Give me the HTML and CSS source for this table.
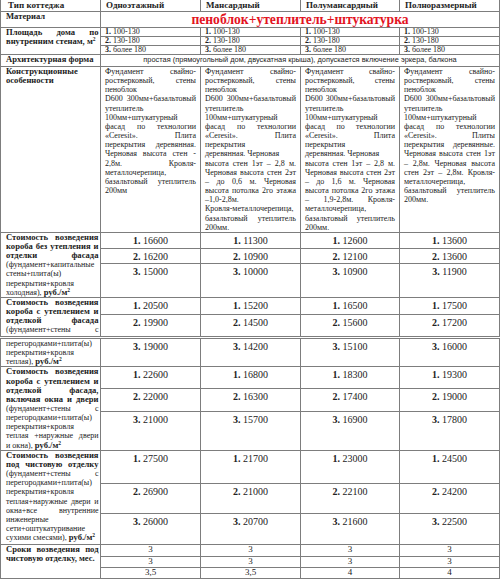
FILE: index.html
```html
<!DOCTYPE html>
<html lang="ru">
<head>
<meta charset="utf-8">
<title>Стоимость коттеджей</title>
<link rel="stylesheet" href="styles.css">
</head>
<body>
<table class="grid first">
  <colgroup>
    <col class="c1"><col class="c2"><col class="c3"><col class="c4"><col class="c5">
  </colgroup>
  <tr class="h-head">
    <th>Тип коттеджа</th>
    <th>Одноэтажный</th>
    <th>Мансардный</th>
    <th>Полумансардный</th>
    <th>Полноразмерный</th>
  </tr>
  <tr class="h-mat">
    <td class="lbl">Материал</td>
    <td colspan="4" class="material">пеноблок+утеплитель+штукатурка</td>
  </tr>
  <tr class="h-area">
    <td rowspan="3" class="lbl">
      <span class="ln j">Площадь дома по</span>
      <span class="ln">внутренним стенам, м<sup>2</sup></span>
    </td>
    <td class="area"><b>1.</b> 100-130</td>
    <td class="area"><b>1.</b> 100-130</td>
    <td class="area"><b>1.</b> 100-130</td>
    <td class="area"><b>1.</b> 100-130</td>
  </tr>
  <tr class="h-area">
    <td class="area"><b>2.</b> 130-180</td>
    <td class="area"><b>2.</b> 130-180</td>
    <td class="area"><b>2.</b> 130-180</td>
    <td class="area"><b>2.</b> 130-180</td>
  </tr>
  <tr class="h-area">
    <td class="area"><b>3.</b> более 180</td>
    <td class="area"><b>3.</b> более 180</td>
    <td class="area"><b>3.</b> более 180</td>
    <td class="area"><b>3.</b> более 180</td>
  </tr>
  <tr class="h-arch">
    <td class="lbl">Архитектурная форма</td>
    <td colspan="4" class="arch">простая (прямоугольный дом, двускатная крыша), допускается включение эркера, балкона</td>
  </tr>
  <tr class="h-constr">
    <td class="lbl">Конструкционные особенности</td>
    <td class="desc">Фундамент свайно-ростверковый, стены пеноблок D600&nbsp;300мм+базальтовый утеплитель 100мм+штукатурный фасад по технологии «Ceresit». Плита перекрытия деревянная. Черновая высота стен - 2,8м. Кровля-металлочерепица, базальтовый утеплитель 200мм</td>
    <td class="desc">Фундамент свайно-ростверковый, стены пеноблок D600&nbsp;300мм+базальтовый утеплитель 100мм+штукатурный фасад по технологии «Ceresit». Плита перекрытия<br>деревянная. Черновая<br>высота стен 1эт – 2,8 м. Черновая высота стен 2эт – до 0,6 м. Черновая высота потолка 2го этажа –1,0-2,8м.<br>Кровля-металлочерепица, базальтовый утеплитель 200мм.</td>
    <td class="desc">Фундамент свайно-ростверковый, стены пеноблок D600&nbsp;300мм+базальтовый утеплитель 100мм+штукатурный фасад по технологии «Ceresit». Плита перекрытия<br>деревянная. Черновая<br>высота стен 1эт – 2,8 м. Черновая высота стен 2эт – до 1,6 м. Черновая высота потолка 2го этажа – 1,9-2,8м. Кровля-металлочерепица, базальтовый утеплитель 200мм.</td>
    <td class="desc">Фундамент свайно-ростверковый, стены пеноблок D600&nbsp;300мм+базальтовый утеплитель 100мм+штукатурный фасад по технологии «Ceresit». Плиты перекрытия деревянные. Черновая высота стен 1эт – 2,8м. Черновая высота стен 2эт – 2,8м. Кровля-металлочерепица, базальтовый утеплитель 200мм.</td>
  </tr>
  <tr class="h16">
    <td rowspan="3" class="lbl">
      <span class="ln j">Стоимость возведения</span>
      <span class="ln j">короба без утепления и</span>
      <span class="ln j">отделки фасада</span>
      <span class="ln n">(фундамент+капитальные</span>
      <span class="ln n">стены+плита(ы)</span>
      <span class="ln n">перекрытия+кровля</span>
      <span class="ln"><span class="n">холодная),</span> руб./м<sup>2</sup></span>
    </td>
    <td class="num"><b>1.</b> 16600</td>
    <td class="num"><b>1.</b> 11300</td>
    <td class="num"><b>1.</b> 12600</td>
    <td class="num"><b>1.</b> 13600</td>
  </tr>
  <tr class="h15">
    <td class="num"><b>2.</b> 16200</td>
    <td class="num"><b>2.</b> 10900</td>
    <td class="num"><b>2.</b> 12100</td>
    <td class="num"><b>2.</b> 13600</td>
  </tr>
  <tr class="h34">
    <td class="num"><b>3.</b> 15000</td>
    <td class="num"><b>3.</b> 10000</td>
    <td class="num"><b>3.</b> 10900</td>
    <td class="num"><b>3.</b> 11900</td>
  </tr>
  <tr class="h17">
    <td rowspan="2" class="lbl">
      <span class="ln j">Стоимость возведения</span>
      <span class="ln j">короба с утеплением и</span>
      <span class="ln j">отделкой фасада</span>
      <span class="ln j n">(фундамент+стены с</span>
    </td>
    <td class="num"><b>1.</b> 20500</td>
    <td class="num"><b>1.</b> 15200</td>
    <td class="num"><b>1.</b> 16500</td>
    <td class="num"><b>1.</b> 17500</td>
  </tr>
  <tr class="h22">
    <td class="num"><b>2.</b> 19900</td>
    <td class="num"><b>2.</b> 14500</td>
    <td class="num"><b>2.</b> 15600</td>
    <td class="num"><b>2.</b> 17200</td>
  </tr>
</table>
<table class="grid second">
  <colgroup>
    <col class="c1"><col class="c2"><col class="c3"><col class="c4"><col class="c5">
  </colgroup>
  <tr class="h28">
    <td class="lbl">
      <span class="ln n">перегородками+плита(ы)</span>
      <span class="ln n">перекрытия+кровля</span>
      <span class="ln"><span class="n">теплая),</span> руб./м<sup>2</sup></span>
    </td>
    <td class="num"><b>3.</b> 19000</td>
    <td class="num"><b>3.</b> 14200</td>
    <td class="num"><b>3.</b> 15100</td>
    <td class="num"><b>3.</b> 16000</td>
  </tr>
  <tr class="h22">
    <td rowspan="3" class="lbl">
      <span class="ln j">Стоимость возведения</span>
      <span class="ln j">короба с утеплением и</span>
      <span class="ln j">отделкой фасада,</span>
      <span class="ln j">включая окна и двери</span>
      <span class="ln j n">(фундамент+стены с</span>
      <span class="ln n">перегородками+плита(ы)</span>
      <span class="ln n">перекрытия+кровля</span>
      <span class="ln j n">теплая +наружные двери</span>
      <span class="ln"><span class="n">и окна),</span> руб./м<sup>2</sup></span>
    </td>
    <td class="num"><b>1.</b> 22600</td>
    <td class="num"><b>1.</b> 16800</td>
    <td class="num"><b>1.</b> 18300</td>
    <td class="num"><b>1.</b> 19300</td>
  </tr>
  <tr class="h22">
    <td class="num"><b>2.</b> 22000</td>
    <td class="num"><b>2.</b> 16300</td>
    <td class="num"><b>2.</b> 17400</td>
    <td class="num"><b>2.</b> 19000</td>
  </tr>
  <tr class="h39">
    <td class="num"><b>3.</b> 21000</td>
    <td class="num"><b>3.</b> 15700</td>
    <td class="num"><b>3.</b> 16900</td>
    <td class="num"><b>3.</b> 17800</td>
  </tr>
  <tr class="h33">
    <td rowspan="3" class="lbl">
      <span class="ln j">Стоимость возведения</span>
      <span class="ln j">под чистовую отделку</span>
      <span class="ln j n">(фундамент+стены с</span>
      <span class="ln n">перегородками+плита(ы)</span>
      <span class="ln n">перекрытия+кровля</span>
      <span class="ln j n">теплая+наружные двери и</span>
      <span class="ln j n">окна+все внутренние</span>
      <span class="ln n">инженерные</span>
      <span class="ln n">сети+оштукатуривание</span>
      <span class="ln"><span class="n">сухими смесями),</span> руб./м<sup>2</sup></span>
    </td>
    <td class="num"><b>1.</b> 27500</td>
    <td class="num"><b>1.</b> 21700</td>
    <td class="num"><b>1.</b> 23000</td>
    <td class="num"><b>1.</b> 24500</td>
  </tr>
  <tr class="h30">
    <td class="num"><b>2.</b> 26900</td>
    <td class="num"><b>2.</b> 21000</td>
    <td class="num"><b>2.</b> 22100</td>
    <td class="num"><b>2.</b> 24200</td>
  </tr>
  <tr class="h31">
    <td class="num"><b>3.</b> 26000</td>
    <td class="num"><b>3.</b> 20700</td>
    <td class="num"><b>3.</b> 21600</td>
    <td class="num"><b>3.</b> 22500</td>
  </tr>
  <tr class="h12">
    <td rowspan="3" class="lbl">
      <span class="ln j">Сроки возведения под</span>
      <span class="ln">чистовую отделку, мес.</span>
    </td>
    <td class="term">3</td>
    <td class="term">3</td>
    <td class="term">3</td>
    <td class="term">3</td>
  </tr>
  <tr class="h11">
    <td class="term">3</td>
    <td class="term">3</td>
    <td class="term">3</td>
    <td class="term">3</td>
  </tr>
  <tr class="h11">
    <td class="term">3,5</td>
    <td class="term">3,5</td>
    <td class="term">4</td>
    <td class="term">4</td>
  </tr>
</table>
</body>
</html>
```
FILE: styles.css
```css
html, body {
  margin: 0;
  padding: 0;
  background: #ffffff;
}

body {
  font-family: "Liberation Serif", "Times New Roman", serif;
  font-size: 8px;
  line-height: 9.15px;
  color: #222222;
}

.grid {
  border-collapse: collapse;
  table-layout: fixed;
  width: 499px;
}

.first {
  margin-top: -1px;
}

.second {
  margin-top: 1px;
}

.c1, .c2, .c3, .c5 { width: 100px; }
.c4 { width: 99px; }

.grid th,
.grid td {
  border: 1px solid #7d7d7d;
  padding: 0 4px;
  vertical-align: top;
  overflow: hidden;
}

.grid th {
  font-weight: bold;
  text-align: left;
  font-size: 9px;
  padding: 1px 5px 0 5px;
}

.grid th:first-child {
  padding-left: 7px;
}

.grid .lbl {
  font-weight: bold;
  font-size: 8.6px;
  text-align: left;
  padding-left: 5px;
  padding-right: 1.5px;
}

.ln {
  display: block;
  white-space: nowrap;
}

.ln.j {
  text-align: justify;
  text-align-last: justify;
}

.lbl .n {
  font-weight: normal;
  font-size: 8px;
}

sup {
  font-size: 5.5px;
  line-height: 0;
  vertical-align: 3px;
}

.grid .material {
  color: #e3141f;
  font-weight: bold;
  font-size: 13.6px;
  line-height: 15px;
  text-align: center;
  vertical-align: middle;
  padding: 0;
}

.area {
  line-height: 8px;
  padding-top: 1px;
}

.arch {
  font-family: "Liberation Sans", Arial, sans-serif;
  font-size: 7.4px;
  text-align: center;
  vertical-align: middle;
  line-height: 9px;
}

.desc {
  text-align: justify;
}

.grid .num {
  text-align: center;
  font-size: 10px;
  line-height: 11px;
  padding-top: 2px;
}

.term {
  text-align: center;
  font-size: 9px;
  line-height: 9px;
  vertical-align: middle;
}

.h-head { height: 12px; }
.h-mat { height: 16px; }
.h-area { height: 9px; }
.h-arch { height: 12px; }
.h16 { height: 16px; }
.h15 { height: 15px; }
.h34 { height: 34px; }
.h17 { height: 17px; }
.h22 { height: 22px; }
.h28 { height: 28px; }
.h39 { height: 39px; }
.h33 { height: 33px; }
.h30 { height: 30px; }
.h31 { height: 31px; }
.h12 { height: 12px; }
.h11 { height: 11px; }
```
